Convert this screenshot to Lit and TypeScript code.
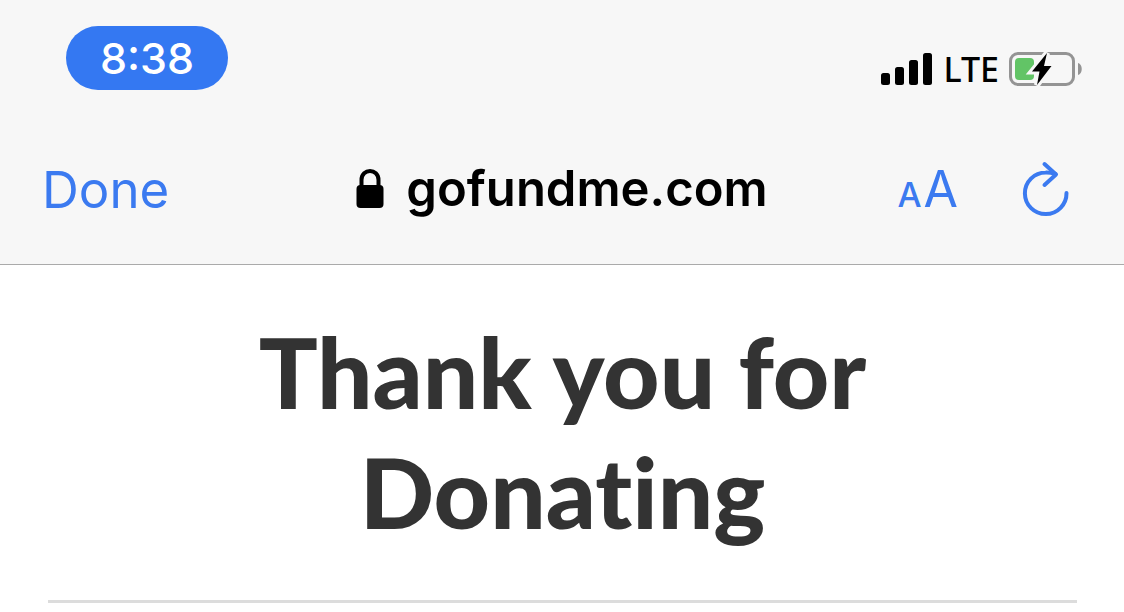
import { LitElement, html, css } from "lit";
import { customElement } from "lit/decorators.js";

@customElement("status-bar")
class StatusBar extends LitElement {
  static styles = css`
    :host {
      display: flex;
      justify-content: space-between;
      align-items: flex-start;
      padding: 26px 42px 0 66px;
    }
    .time {
      width: 162px;
      height: 64px;
      border-radius: 32px;
      background: #3478f2;
      color: #fff;
      font-size: 43px;
      font-weight: 500;
      line-height: 64px;
      text-align: center;
    }
    .indicators {
      display: flex;
      align-items: center;
      gap: 10px;
      padding-top: 23px;
    }
    .network {
      font-family: "Noto Sans", sans-serif;
      font-size: 34px;
      font-weight: 500;
      line-height: 40px;
    }
    svg {
      display: block;
    }
  `;

  render() {
    return html`
      <time class="time">8:38</time>
      <div class="indicators">
        <svg width="52" height="34" viewBox="0 0 52 34" role="img" aria-label="Signal strength">
          <rect x="0" y="21" width="9" height="12" rx="2.5" />
          <rect x="14" y="15" width="9" height="18" rx="2.5" />
          <rect x="28" y="8" width="9" height="25" rx="2.5" />
          <rect x="42" y="1" width="9" height="32" rx="2.5" />
        </svg>
        <span class="network">LTE</span>
        <svg width="73" height="34" viewBox="0 0 73 34" role="img" aria-label="Battery charging">
          <rect x="1.5" y="1.5" width="63" height="31" rx="7.5" fill="none" stroke="#949494" stroke-width="3" />
          <rect x="6" y="6" width="19" height="22" rx="4" fill="#62c466" />
          <path d="M69 11 C74 12 74 22 69 23 Z" fill="#949494" />
          <path d="M38 1 L23 19.5 H30 L28 33 L42 14 H35 Z" fill="none" stroke="#f7f7f7" stroke-width="6" />
          <path d="M38 1 L23 19.5 H30.5 L28 33 L42.5 14 H35 Z" />
        </svg>
      </div>
    `;
  }
}

@customElement("browser-bar")
class BrowserBar extends LitElement {
  static styles = css`
    :host {
      display: grid;
      grid-template-columns: 1fr auto 1fr;
      align-items: center;
      height: 80px;
      padding: 0 42px;
    }
    button {
      padding: 0;
      border: 0;
      background: none;
      color: #3b7af0;
      font: inherit;
      cursor: pointer;
    }
    .done {
      justify-self: start;
      font-size: 51px;
    }
    .address {
      display: flex;
      align-items: center;
      gap: 22px;
      font-size: 49px;
      font-weight: 600;
      line-height: 64px;
    }
    .tools {
      display: flex;
      justify-content: flex-end;
      align-items: center;
      gap: 64px;
      padding-right: 12px;
    }
    .text-size {
      display: flex;
      align-items: baseline;
      gap: 2px;
      font-size: 50px;
      line-height: 64px;
    }
    .small {
      font-size: 34px;
      font-weight: 500;
      line-height: 1;
    }
    svg {
      display: block;
    }
  `;

  render() {
    return html`
      <button class="done">Done</button>
      <div class="address">
        <svg width="28" height="40" viewBox="0 0 28 40" role="img" aria-label="Secure">
          <path d="M5.5 18 V11 C5.5 -1 22.5 -1 22.5 11 V18" fill="none" stroke="#000" stroke-width="4" />
          <rect x="0.5" y="16" width="27" height="23" rx="4" />
        </svg>
        <span>gofundme.com</span>
      </div>
      <div class="tools">
        <button class="text-size" aria-label="Text size"><span class="small">A</span><span>A</span></button>
        <button aria-label="Reload">
          <svg width="48" height="56" viewBox="0 1 48 56" fill="none" stroke="#3b7af0" stroke-width="4" stroke-linecap="round" stroke-linejoin="round">
            <path d="M44.5 33 A20.8 20.8 0 1 1 23.7 12.5 C27 12.3 30 13 33.5 14" />
            <path d="M22.5 4 L34 14.5 L22.5 25" />
          </svg>
        </button>
      </div>
    `;
  }
}

@customElement("app-root")
class AppRoot extends LitElement {
  static styles = css`
    :host {
      display: block;
      min-height: 100vh;
      background: #fff;
      color: #000;
      font-family: Inter, "Liberation Sans", sans-serif;
    }
    .chrome {
      display: flex;
      flex-direction: column;
      gap: 59px;
      padding-bottom: 35px;
      background: #f7f7f7;
      border-bottom: 1px solid #aaa;
    }
    .content {
      padding: 46px 47px 0 48px;
    }
    .title {
      max-width: 720px;
      margin: 0 auto;
      color: #333;
      font-family: Lato, sans-serif;
      font-size: 98px;
      font-variant-ligatures: none;
      font-weight: 900;
      line-height: 120px;
      text-align: center;
    }
    .rule {
      height: 3px;
      margin: 49px 0 0;
      border: 0;
      background: #dcdcdc;
    }
  `;

  render() {
    return html`
      <header class="chrome">
        <status-bar></status-bar>
        <browser-bar></browser-bar>
      </header>
      <main class="content">
        <h1 class="title">Thank you for Donating</h1>
        <hr class="rule" />
      </main>
    `;
  }
}
